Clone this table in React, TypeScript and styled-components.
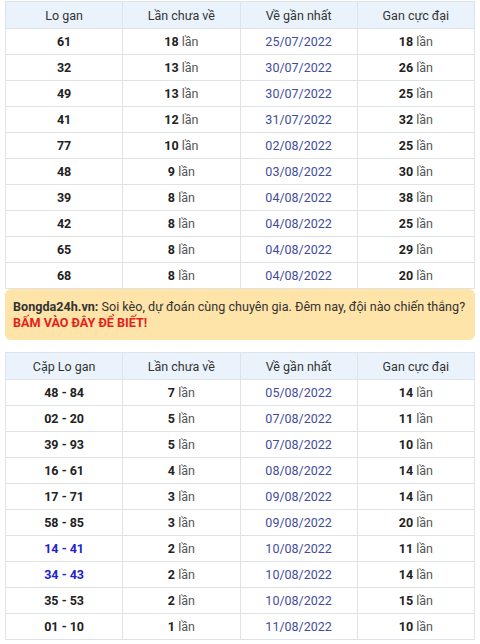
import React from "react";
import styled, { createGlobalStyle } from "styled-components";

const Global = createGlobalStyle`
  html, body { margin: 0; padding: 0; background: #fff; }
  body { font-family: Roboto, "Noto Sans", Arial, sans-serif; color: #222; }
`;

const Page = styled.div`
  width: 480px;
  padding: 1px 5px 0 5px;
  box-sizing: border-box;
  display: flex;
  flex-direction: column;
`;

const Table = styled.table`
  width: 100%;
  border-collapse: collapse;
  table-layout: fixed;
  font-size: 12.5px;
`;

const Th = styled.th`
  height: 26px;
  padding: 0;
  background: #eaf3fc;
  border: 1px solid #dfe3e8;
  font-weight: 400;
  color: #333;
  text-align: center;
`;

const Td = styled.td`
  height: 25px;
  padding: 0;
  border: 1px solid #dfe3e8;
  text-align: center;
  color: #222;
`;

const Num = styled.span<{ $blue?: boolean }>`
  font-weight: 700;
  color: ${(p) => (p.$blue ? "#2222cc" : "#222")};
`;

const Lan = styled.span`
  color: #555;
`;

const DateText = styled.span`
  color: #3f4c9e;
`;

const Banner = styled.div`
  margin: 0 0 12px 0;
  background: #fee4a8;
  border-radius: 6px;
  padding: 10px 8px 9px 8px;
  font-size: 12.6px;
  line-height: 16px;
  color: #333;
  white-space: nowrap;
`;

const Brand = styled.b`
  color: #333;
`;

const Cta = styled.b`
  color: #e3211b;
`;

const t1 = [
  ["61", "18", "25/07/2022", "18"],
  ["32", "13", "30/07/2022", "26"],
  ["49", "13", "30/07/2022", "25"],
  ["41", "12", "31/07/2022", "32"],
  ["77", "10", "02/08/2022", "25"],
  ["48", "9", "03/08/2022", "30"],
  ["39", "8", "04/08/2022", "38"],
  ["42", "8", "04/08/2022", "25"],
  ["65", "8", "04/08/2022", "29"],
  ["68", "8", "04/08/2022", "20"],
];

const t2: [string, string, string, string, boolean][] = [
  ["48 - 84", "7", "05/08/2022", "14", false],
  ["02 - 20", "5", "07/08/2022", "11", false],
  ["39 - 93", "5", "07/08/2022", "10", false],
  ["16 - 61", "4", "08/08/2022", "14", false],
  ["17 - 71", "3", "09/08/2022", "14", false],
  ["58 - 85", "3", "09/08/2022", "20", false],
  ["14 - 41", "2", "10/08/2022", "11", true],
  ["34 - 43", "2", "10/08/2022", "14", true],
  ["35 - 53", "2", "10/08/2022", "15", false],
  ["01 - 10", "1", "11/08/2022", "10", false],
];

function Header({ first }: { first: string }) {
  return (
    <thead>
      <tr>
        <Th>{first}</Th>
        <Th>Lần chưa về</Th>
        <Th>Về gần nhất</Th>
        <Th>Gan cực đại</Th>
      </tr>
    </thead>
  );
}

export default function App() {
  return (
    <>
      <Global />
      <Page>
        <Table>
          <Header first="Lo gan" />
          <tbody>
            {t1.map((r) => (
              <tr key={r[0]}>
                <Td><Num>{r[0]}</Num></Td>
                <Td><Num>{r[1]}</Num> <Lan>lần</Lan></Td>
                <Td><DateText>{r[2]}</DateText></Td>
                <Td><Num>{r[3]}</Num> <Lan>lần</Lan></Td>
              </tr>
            ))}
          </tbody>
        </Table>
        <Banner>
          <Brand>Bongda24h.vn:</Brand> Soi kèo, dự đoán cùng chuyên gia. Đêm nay, đội nào chiến thắng?
          <br />
          <Cta>BẤM VÀO ĐÂY ĐỂ BIẾT!</Cta>
        </Banner>
        <Table>
          <Header first="Cặp Lo gan" />
          <tbody>
            {t2.map((r) => (
              <tr key={r[0]}>
                <Td><Num $blue={r[4]}>{r[0]}</Num></Td>
                <Td><Num>{r[1]}</Num> <Lan>lần</Lan></Td>
                <Td><DateText>{r[2]}</DateText></Td>
                <Td><Num>{r[3]}</Num> <Lan>lần</Lan></Td>
              </tr>
            ))}
          </tbody>
        </Table>
      </Page>
    </>
  );
}
